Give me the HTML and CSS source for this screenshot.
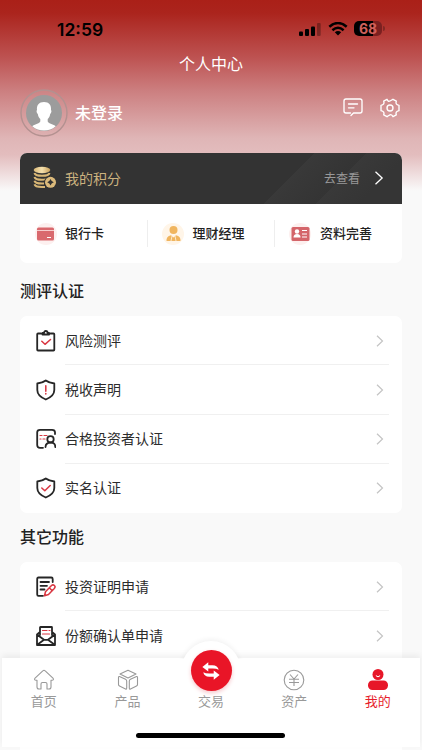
FILE: index.html
```html
<!DOCTYPE html>
<html lang="zh-CN">
<head>
<meta charset="utf-8">
<meta name="viewport" content="width=device-width, initial-scale=1">
<title>个人中心</title>
<link rel="stylesheet" href="styles.css">
</head>
<body>
<main class="app">
  <div class="status">
    <span class="time">12:59</span>
    <span class="status-icons">
      <svg class="signal" viewBox="0 0 22 14"><rect x="0" y="8.500" width="4" height="4.500" rx="1"/><rect x="6" y="6" width="4" height="7" rx="1"/><rect x="12" y="3.500" width="4" height="9.500" rx="1"/><rect x="18" y="0" width="3.700" height="13" rx="1" opacity=".3"/></svg>
      <svg class="wifi" viewBox="0 0 20 14"><path d="M1.300 4.800Q10-2.700 18.700 4.800M4.400 8.200Q10 3.400 15.600 8.200" fill="none" stroke="#000" stroke-width="2.500"/><path d="M6.800 10.300Q10 7.700 13.200 10.300L10 13.500Z"/></svg>
      <span class="battery">68</span>
      <i class="battery-cap"></i>
    </span>
  </div>
  <h1>个人中心</h1>
  <header class="profile">
    <svg class="avatar" viewBox="0 0 48 48"><circle cx="24" cy="24" r="23" fill="#d8a7a7" fill-opacity=".15" stroke="#b39190" stroke-width="1.400"/><circle cx="24" cy="24" r="18" fill="#9c9c9c"/><path d="M24 13c5 0 7.500 3 7 8 .8.500.5 3-.8 4-.5 3-1.500 4-2.500 5v2.500c1 2.500 6 2.500 8 4.800A18 18 0 0 1 12.300 37.300c2-2.300 7-2.300 8-4.800v-2.500c-1-1-2-2-2.500-5-1.300-1-1.600-3.500-.8-4-.5-5 2-8 7-8Z" fill="#fff"/></svg>
    <strong>未登录</strong>
    <div class="tools">
      <svg viewBox="0 0 20 20"><path d="M7.500 15H3Q1 15 1 13V3Q1 1 3 1H17Q19 1 19 3V13Q19 15 17 15H10.500L8 17.500M5.500 6H14.500M5.500 9.800H11"/></svg>
      <svg viewBox="0 0 20 20"><path d="M7 1.300Q8 4 10 3T13 1.300L16.300 3.200Q15 6.500 19 7.300V12.700Q15 13.500 16.300 16.800L13 18.700Q11.800 16 10 16.800T7 18.700L3.700 16.800Q5 13.500 1 12.700V7.300Q5 6.500 3.700 3.200Z"/><circle cx="10" cy="10" r="3"/></svg>
    </div>
  </header>
  <section class="asset">
    <div class="points">
      <svg class="coins" viewBox="0 0 24 24"><defs><linearGradient id="gold"><stop stop-color="#dcba78"/><stop offset=".5" stop-color="#f5e0ad"/><stop offset="1" stop-color="#c9a05a"/></linearGradient></defs><ellipse cx="9" cy="4" rx="8.300" ry="3.300" fill="url(#gold)"/><path d="M1.500 7Q2 9.800 9 9.800T16.500 7M1.500 11Q2 13.800 9 13.800Q12 13.800 13 13M1.500 14.800Q2 17.600 9 17.600H11M1.500 18.300Q2 21 9 21H12" fill="none" stroke="#d8b675" stroke-width="2"/><circle cx="17.500" cy="16.300" r="6.300" fill="#333"/><circle cx="17.500" cy="16.300" r="5.500" fill="#dcba7b"/><path d="M17.500 13L18.700 15.100 20.800 16.300 18.700 17.500 17.500 19.600 16.300 17.500 14.200 16.300 16.300 15.100Z" fill="#333"/></svg>
      <span>我的积分</span><em>去查看</em>
      <svg class="arrow" viewBox="0 0 8 12"><path d="M1 .7L6.700 6 1 11.300"/></svg>
    </div>
    <div class="shortcuts">
      <a><svg viewBox="0 0 24 24"><circle cx="13" cy="12" r="11" fill="#fdf0ef"/><rect x="4" y="5.500" width="17" height="13" rx="1.500" fill="#d9696e"/><path d="M4 8.500H21" stroke="#f5cccd"/><path d="M14 15.500H18" stroke="#fff"/></svg><span>银行卡</span></a>
      <a><svg viewBox="0 0 24 24"><circle cx="12" cy="12" r="11" fill="#fff5e8"/><circle cx="12.500" cy="8" r="4" fill="#f0b55f"/><path d="M5.500 19Q5 14.500 10 13.200L12.500 15.500 15 13.200Q20 14.500 19.500 19Z" fill="#f0b55f"/><path d="M11 14L10 19M14 14L15 19" stroke="#fff4e3" stroke-width=".8"/></svg><span>理财经理</span></a>
      <a><svg viewBox="0 0 24 24"><circle cx="12" cy="12" r="11" fill="#fdf0ef"/><rect x="3.500" y="5" width="18" height="14" rx="1.500" fill="#d4656a"/><circle cx="9" cy="9.500" r="2.200" fill="#fff"/><path d="M5.500 15.500Q5.500 12 9 12T12.500 15.500Z" fill="#fff"/><path d="M14 8.500H19M14 12H19M14 15H19" stroke="#fff" stroke-width="1.200"/></svg><span>资料完善</span></a>
    </div>
  </section>
  <h2>测评认证</h2>
  <section class="list">
    <div class="row"><svg class="icon" viewBox="0 0 20 22"><path d="M5 3.500H2Q1.200 3.500 1.200 4.300V19.700Q1.200 20.500 2 20.500H17.500Q18.300 20.500 18.300 19.700V4.300Q18.300 3.500 17.500 3.500H14.500M6.500 4.500V3H8Q8 1 9.800 1T11.600 3H13.100V4.500Z"/><path class="red" d="M5.800 11.300L9 14.300 14.500 9.500"/></svg><span>风险测评</span><svg class="arrow" viewBox="0 0 8 12"><path d="M1 .7L6.500 6 1 11.300"/></svg></div>
    <div class="row"><svg class="icon" viewBox="0 0 20 22"><path d="M9.800 1.500Q13 4 18.300 4.500V11Q18.300 17 9.800 20.500Q1.300 17 1.300 11V4.500Q6.600 4 9.800 1.500Z"/><path class="red" d="M9.800 6.800V12.300M9.800 14.500V15"/></svg><span>税收声明</span><svg class="arrow" viewBox="0 0 8 12"><path d="M1 .7L6.500 6 1 11.300"/></svg></div>
    <div class="row"><svg class="icon" viewBox="0 0 20 22"><path d="M7 19.800H4Q1.200 19.800 1.200 17V4.300Q1.200 1.800 4 1.800H16Q19 1.800 19 4.300V6M9.500 19Q9.700 14.600 14.500 14.500T19.300 19"/><circle cx="14.500" cy="11.300" r="3.200"/><path class="red thin" d="M4 7.500H6M8 7.500H11M4 11H5M7 11H9"/></svg><span>合格投资者认证</span><svg class="arrow" viewBox="0 0 8 12"><path d="M1 .7L6.500 6 1 11.300"/></svg></div>
    <div class="row"><svg class="icon" viewBox="0 0 20 22"><path d="M9.800 1.500Q13 4 18.300 4.500V11Q18.300 17 9.800 20.500Q1.300 17 1.300 11V4.500Q6.600 4 9.800 1.500Z"/><path class="red" d="M5.800 11L8.800 13.800 14.200 8.500"/></svg><span>实名认证</span><svg class="arrow" viewBox="0 0 8 12"><path d="M1 .7L6.500 6 1 11.300"/></svg></div>
  </section>
  <h2 class="other">其它功能</h2>
  <section class="list extended">
    <div class="row"><svg class="icon" viewBox="0 0 20 22"><path d="M7 19.800H2.500Q1.200 19.800 1.200 18.500V3Q1.200 1.500 2.500 1.500H15.300Q16.700 1.500 16.700 3V6M4.500 6H13M4.500 9.800H11M4.500 13.500H8.500"/><path class="red" d="M8.500 19.700L9.500 15.700 15.500 9.500Q17 8.200 18.400 9.500T18.300 12.500L12.500 18.500ZM13.500 12L16 14.500"/></svg><span>投资证明申请</span><svg class="arrow" viewBox="0 0 8 12"><path d="M1 .7L6.500 6 1 11.300"/></svg></div>
    <div class="row"><svg class="icon" viewBox="0 0 20 22"><path d="M4 10V2.500Q4 2 4.500 2H15.500Q16 2 16 2.500V10M4 7L1 9.500V20H19V9.500L16 7M1.300 9.800L8 14.800 1.300 19.700M18.700 9.800L12 14.800 18.700 19.700M8 14.800H12"/><path class="red thin" d="M6.500 5.500H11M13 5.500H14M6.500 9H13.500"/></svg><span>份额确认单申请</span><svg class="arrow" viewBox="0 0 8 12"><path d="M1 .7L6.500 6 1 11.300"/></svg></div>
  </section>
</main>
<nav class="tabs">
  <i class="bulge"></i>
  <a><svg viewBox="0 0 22 22"><path d="M11 1.300Q11.600 1.300 12.200 1.900L20.200 9.400Q21 11 19 11.300H18V18Q18 20 16 20H14V15Q14 13.500 12.500 13.500H9.500Q8 13.500 8 15V20H6Q4 20 4 18V11.300H3Q1 11 1.800 9.400L9.800 1.900Q10.400 1.300 11 1.300Z"/></svg>首页</a>
  <a><svg viewBox="0 0 22 22"><path d="M11 1.200L19 5 11 9 3 5ZM2.500 7.500L8.500 10.300Q9.700 11 9.700 12V19Q9.700 20.500 8.500 20L2.500 17Q1.500 16.500 1.500 15.500V8.500Q1.500 7.200 2.500 7.500ZM19.500 7.500L13.500 10.300Q12.300 11 12.300 12V19Q12.300 20.500 13.500 20L19.500 17Q20.500 16.500 20.500 15.500V8.500Q20.500 7.200 19.500 7.500Z"/></svg>产品</a>
  <a><span class="trade"><svg viewBox="0 0 24 22"><path d="M2.500 6.500L9 1.500V4.700H13.500Q19.500 4.900 20.500 9.700Q18 8.300 14 8.300H9V11.500ZM21.500 15.500L15 10.500V13.700H10.500Q5.500 13.700 3.500 12.300Q4.500 17.100 10 17.300H15V20.500Z"/></svg></span>交易</a>
  <a><svg viewBox="0 0 22 22"><circle cx="11" cy="11" r="9.800"/><path d="M7 5.500L11 10 15 5.500M11 10V17M6 10.200H16M6 13.500H16"/></svg>资产</a>
  <a class="active"><svg viewBox="0 0 22 22"><rect x="1" y="11.500" width="20" height="9.500" rx="4.500"/><circle cx="11" cy="5.500" r="5.500"/><path class="smile" d="M9 6.500Q11 8.700 13 6.500"/></svg>我的</a>
  <i class="home"></i>
</nav>
</body>
</html>
```
FILE: styles.css
```css
* { box-sizing: border-box; }
body { margin: 0; width: 422px; height: 750px; overflow: hidden; position: relative; background: #f9f9f9; color: #222; font-family: "Noto Sans CJK SC", sans-serif; }
.app { height: 750px; overflow: hidden; padding: 0 20px; background: linear-gradient(#aa2018 0, #ab241d 13px, #bd5251 57px, #cc7f80 91px, #dfb5b6 138px, #e3bdbe 155px, #f9f8f8 190px, #f9f9f9 192px); }
h1, h2 { margin: 0; }
.status { height: 49px; display: flex; justify-content: space-between; padding: 20px 17px 0 37px; color: #000; }
.time { font: 600 17.5px/19px Inter, sans-serif; letter-spacing: 0; }
.status-icons { display: flex; height: 17px; align-items: center; }
.signal { width: 22px; height: 14px; margin: 2px 7px 0 0; }
.wifi { width: 20px; height: 14px; margin-right: 6px; }
.battery { width: 28px; height: 15px; border-radius: 5px; background: linear-gradient(90deg, #000 68%, #7b2020 68%); color: #d0605b; text-align: center; font: 700 14px/15px Inter, sans-serif; }
.battery-cap { width: 2px; height: 5px; margin-left: 1px; border-radius: 0 2px 2px 0; background: #822723; }
h1 { height: 28px; text-align: center; font-size: 16px; line-height: 28px; font-weight: 400; color: #fff; }
.profile { height: 76px; display: flex; align-items: center; color: #fff; }
.avatar { width: 48px; height: 48px; margin-top: -5px; }
.profile strong { margin: -6px 0 0 7px; font-size: 16px; font-weight: 500; }
.tools { display: flex; gap: 17px; margin: -15px 2px 0 auto; }
.tools svg { width: 20px; height: 20px; fill: none; stroke: #fff; stroke-width: 1.35; stroke-linejoin: round; stroke-linecap: round; }
.asset { height: 110px; border-radius: 7px; overflow: hidden; background: #fff; }
.points { height: 51px; display: flex; align-items: center; padding: 0 18px 0 13px; color: #cbb27f; background: linear-gradient(135deg, #333 0 68%, #393939 68%, #343434 79.9%, #393939 80%, #353535 90%); font-size: 14px; }
.points span, .points em { padding-bottom: 2px; }
.coins { width: 24px; height: 24px; margin: -2px 8px 0 0; }
.points em { margin: 0 14px 0 auto; color: #999; font-size: 12px; font-style: normal; }
.arrow { flex: none; width: 8px; height: 12px; fill: none; stroke: #c4c4c4; stroke-width: 1.2; }
.points .arrow { width: 10px; height: 14px; margin-top: -1px; stroke: #fff; stroke-width: 1.1; }
.shortcuts { height: 59px; display: grid; grid-template-columns: 127.500px 127.500px 127px; align-items: center; }
.shortcuts a { height: 27px; display: flex; align-items: center; padding-left: 13px; font-size: 13px; font-weight: 500; border-right: 1px solid #eee; }
.shortcuts a:last-child { border: 0; }
.shortcuts svg { width: 24px; height: 24px; margin-right: 8px; }
.shortcuts span { padding-bottom: 2px; }
h2 { font-size: 16px; line-height: 24px; font-weight: 500; margin: 15px 0 14px; }
h2.other { margin: 11px 0 14px; }
.list { background: #fff; border-radius: 7px; }
.extended { height: 220px; }
.row { height: 49.250px; display: flex; align-items: center; padding: 0 18px 0 16px; position: relative; font-size: 14px; color: #2c2c2c; }
.row span { padding-bottom: 2px; }
.row:not(:last-child)::after { content: ""; position: absolute; left: 45px; right: 13px; bottom: 0; height: 1px; background: #f0f0f0; }
.icon { width: 20px; height: 22px; margin-right: 9px; fill: none; stroke: #262626; stroke-width: 1.8; stroke-linejoin: round; stroke-linecap: round; }
.icon .red { stroke: #d93843; stroke-width: 1.55; }
.icon .thin { stroke-width: 1.2; }
.row .arrow { margin-left: auto; }
.tabs { position: absolute; left: 2px; top: 658px; width: 418px; height: 89px; display: grid; grid-template-columns: repeat(5, 83.400px); background: #fff; box-shadow: 0 -3px 6px rgba(0,0,0,.06); }
.tabs a { position: relative; height: 55px; padding-top: 11px; display: flex; flex-direction: column; align-items: center; font-size: 13px; line-height: 19px; color: #999; }
.tabs a > svg { width: 22px; height: 22px; fill: none; stroke: #999; stroke-width: 1.1; stroke-linejoin: round; }
.bulge { position: absolute; width: 60px; height: 60px; left: 179px; top: -17px; border-radius: 50%; background: #fff; box-shadow: 0 -2px 5px rgba(0,0,0,.05); clip-path: inset(-8px -8px 42px -8px); }
.trade { position: absolute; left: 22px; top: -8px; width: 41px; height: 41px; border-radius: 50%; background: #e91527; display: flex; align-items: center; justify-content: center; box-shadow: 0 2px 4px #f6c7cb; }
.trade svg { width: 22px; height: 20px; fill: #fff; }
.tabs a:nth-of-type(3) { padding: 33px 0 0 1px; }
.tabs a.active { color: #e71d2b; padding-left: 1px; }
.tabs a:nth-of-type(2), .tabs a:nth-of-type(4) { padding-left: 1px; }
.tabs a.active svg { fill: #e71628; stroke: none; }
.tabs .active .smile { fill: none; stroke: #fff; }
.home { position: absolute; left: 134px; bottom: 9px; width: 149px; height: 5px; border-radius: 3px; background: #000; }
```
